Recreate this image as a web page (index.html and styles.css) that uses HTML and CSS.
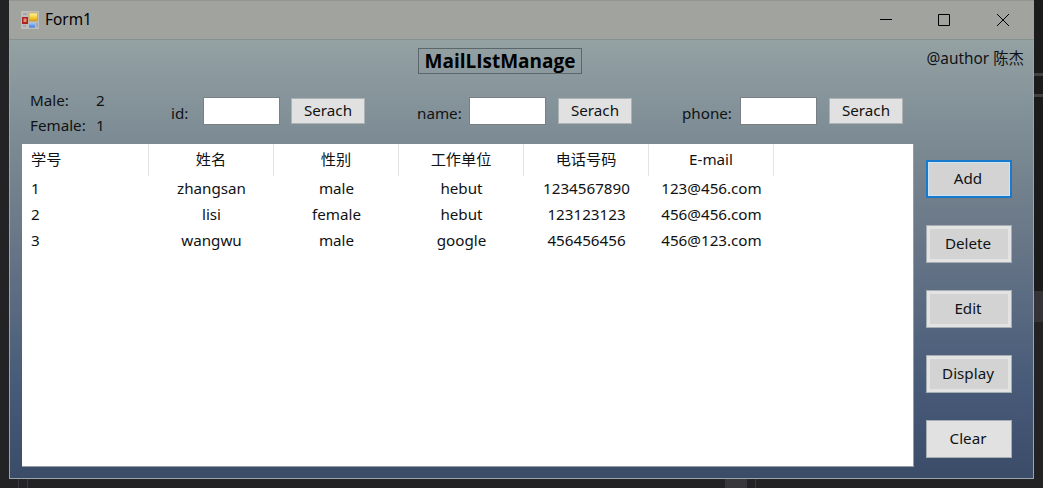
FILE: index.html
```html
<!DOCTYPE html>
<html lang="zh-CN">
<head>
<meta charset="utf-8">
<title>Form1</title>
<link rel="stylesheet" href="styles.css">
</head>
<body>
<div class="window">
  <header class="titlebar">
    <svg class="app-icon" width="18" height="18" viewBox="0 0 18 18">
      <defs>
        <linearGradient id="gold" x2="0" y2="1"><stop stop-color="#fff3a0"/><stop offset=".5" stop-color="#f8d343"/><stop offset="1" stop-color="#d99c16"/></linearGradient>
        <linearGradient id="blue" x2="0" y2="1"><stop stop-color="#9ccaff"/><stop offset="1" stop-color="#3d79dc"/></linearGradient>
      </defs>
      <rect width="18" height="18" fill="#bcbdbc"/>
      <path d="M2 2h4v2H2zM2 14h3v2H2zM15 12h2v4h-2z" fill="#a5a7a8"/>
      <rect x="1" y="6" width="6" height="7" fill="#a92520"/>
      <rect x="2.5" y="7.5" width="3" height="3.5" fill="#e68c7c"/>
      <rect x="8" y="2" width="8.5" height="8" fill="url(#gold)" stroke="#c39a2c" stroke-width=".6"/>
      <rect x="8" y="12" width="6" height="4.5" fill="url(#blue)"/>
    </svg>
    <span class="caption">Form1</span>
    <div class="controls">
      <svg width="12" height="12" viewBox="0 0 12 12"><path d="M0 5.5h12"/></svg>
      <svg width="12" height="12" viewBox="0 0 12 12"><path d="M.5.5h11v11H.5z"/></svg>
      <svg width="12" height="12" viewBox="0 0 12 12"><path d="M0 0l12 12M12 0L0 12"/></svg>
    </div>
  </header>
  <main class="client">
    <div class="heading">
      <h1>MailLIstManage</h1>
      <span class="author">@author 陈杰</span>
    </div>
    <div class="toolbar">
      <dl class="stats"><dt>Male:</dt><dd>2</dd><dt>Female:</dt><dd>1</dd></dl>
      <div class="search search-id"><label for="id">id:</label><input id="id"><button class="go">Serach</button></div>
      <div class="search search-name"><label for="name">name:</label><input id="name"><button class="go">Serach</button></div>
      <div class="search search-phone"><label for="phone">phone:</label><input id="phone"><button class="go">Serach</button></div>
    </div>
    <div class="content">
      <div class="list">
        <div class="row head"><span>学号</span><span>姓名</span><span>性别</span><span>工作单位</span><span>电话号码</span><span>E-mail</span></div>
        <div class="row"><span>1</span><span>zhangsan</span><span>male</span><span>hebut</span><span>1234567890</span><span>123@456.com</span></div>
        <div class="row"><span>2</span><span>lisi</span><span>female</span><span>hebut</span><span>123123123</span><span>456@456.com</span></div>
        <div class="row"><span>3</span><span>wangwu</span><span>male</span><span>google</span><span>456456456</span><span>456@123.com</span></div>
      </div>
      <div class="actions">
        <button class="action focused">Add</button>
        <button class="action">Delete</button>
        <button class="action">Edit</button>
        <button class="action">Display</button>
        <button class="action plain">Clear</button>
      </div>
    </div>
  </main>
</div>
</body>
</html>
```
FILE: styles.css
```css
* { box-sizing: border-box; margin: 0; padding: 0; }
body {
  width: 1043px;
  height: 488px;
  overflow: hidden;
  padding-left: 9px;
  background:
    linear-gradient(#424244, #424244) 1034px 73px / 9px 3px no-repeat,
    linear-gradient(#424244, #424244) 1034px 94px / 9px 3px no-repeat,
    linear-gradient(#343438, #343438) 1034px 291px / 9px 31px no-repeat,
    linear-gradient(#3a3a3e, #3a3a3e) 18px 479px / 1px 9px no-repeat,
    linear-gradient(#3a3a3e, #3a3a3e) 27px 479px / 1px 9px no-repeat,
    linear-gradient(#3a3a3e, #3a3a3e) 755px 479px / 1px 9px no-repeat,
    linear-gradient(#38383c, #38383c) 725px 479px / 22px 9px no-repeat,
    linear-gradient(#1b1b1b, #1b1b1b) 1034px 0 / 9px 322px no-repeat,
    #232325;
  color: #101214;
  font: 15.2px/20px "Noto Sans", "Noto Sans CJK SC", sans-serif;
}
button, input { font: inherit; color: inherit; }
.window { width: 1025px; height: 479px; display: flex; flex-direction: column; }
.titlebar {
  height: 39px;
  display: flex;
  align-items: center;
  padding: 0 25px 0 12px;
  background: #a1a39e;
  border-top: 1px solid #939590;
}
.app-icon { display: block; }
.caption { margin-left: 6px; color: #000; font-size: 15.4px; }
.controls { display: flex; gap: 47px; margin-left: auto; }
.controls svg { display: block; fill: none; stroke: #000; }
.controls svg:first-child { margin-right: -1px; }
.client {
  height: 440px;
  border: 1px solid #9aa5ae;
  border-top-color: #849290;
  background: linear-gradient(#94a2a3 0%, #84929a 15%, #788790 27%, #687687 46%, #56677f 64%, #485b78 78%, #3b4c69 100%);
}
.heading { height: 40px; display: flex; padding: 8px 9px 0 408px; }
h1 {
  width: 164px;
  height: 26px;
  border: 1px solid #5c676b;
  color: #000;
  font: bold 19px/24px "Open Sans", sans-serif;
  text-align: center;
  white-space: nowrap;
}
.author { margin-left: auto; font-size: 15.4px; line-height: 22px; white-space: nowrap; }
.toolbar { height: 64px; display: flex; padding-left: 20px; }
.stats { width: 141px; display: grid; grid-template-columns: 66px 1fr; grid-auto-rows: 25px; padding-top: 8px; line-height: 25px; }
.search { height: 28px; margin-top: 17px; display: flex; }
.search label { line-height: 32px; white-space: nowrap; }
.search input { width: 77px; height: 28px; border: 1px solid #7a7f83; background: #fff; }
.go { width: 74px; height: 26px; margin: 1px 0 0 11px; padding-bottom: 2px; line-height: 22px; background: #e1e1e1; border: 1px solid #adb2b5; }
.search-id { width: 246px; }
.search-id label { width: 32px; }
.search-name { width: 265px; }
.search-name label { width: 52px; }
.search-name .go, .search-phone .go { margin-left: 12px; }
.search-phone label { width: 58px; }
.content { display: flex; padding-left: 12px; }
.list { width: 892px; height: 323px; background: #fff; border: solid #929da8; border-width: 0 1px 1px 0; }
.row { height: 26px; display: grid; grid-template-columns: 127px repeat(5, 125px); line-height: 24px; text-align: center; }
.row span:first-child { text-align: left; padding-left: 9px; }
.row.head { height: 32px; line-height: 30px; }
.row.head span { border-right: 1px solid #e3e3e3; }
.actions { display: flex; flex-direction: column; gap: 27px; padding: 16px 0 0 12px; }
.action { width: 86px; height: 38px; padding: 0 2px 2px 0; background: #d3d3d3; border: 1px solid #a6adb3; box-shadow: inset 0 0 0 3px #e3e3e3; }
.action.focused { border: 2px solid #1979ca; box-shadow: inset 0 0 0 1px #cce4f7; }
.action.plain { background: #e1e1e1; box-shadow: none; }
```
